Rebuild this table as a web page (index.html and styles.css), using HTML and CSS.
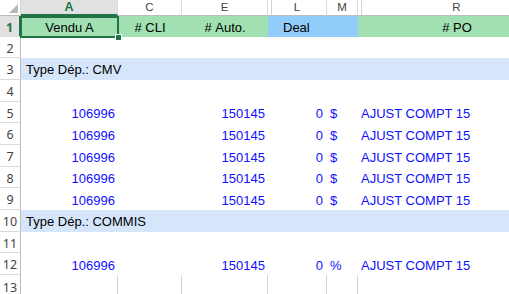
FILE: index.html
```html
<!DOCTYPE html>
<html lang="fr">
<head>
<meta charset="utf-8">
<title>Ventes</title>
<link rel="stylesheet" href="styles.css">
</head>
<body>
<div class="sheet">
  <div class="row hdr">
    <div class="corner"><svg class="tri" width="9" height="9" viewBox="0 0 9 9"><polygon points="9,0 9,9 0,9" fill="#b9b9b9"/></svg></div>
    <div class="col sel">A</div>
    <div class="col">C</div>
    <div class="col">E</div>
    <div class="col gap">L</div>
    <div class="col">M</div>
    <div class="col gap">R</div>
  </div>

  <div class="row h21">
    <div class="rn sel">1</div>
    <div class="c title active">Vendu A</div>
    <div class="c title">#&nbsp;CLI</div>
    <div class="c title">#&nbsp;Auto.</div>
    <div class="c title deal">Deal</div>
    <div class="c title deal"></div>
    <div class="c title">#&nbsp;PO</div>
  </div>

  <div class="row h21"><div class="rn">2</div><div class="blank"></div></div>

  <div class="row h22"><div class="rn">3</div><div class="band">Type Dép.: CMV</div></div>

  <div class="row h22"><div class="rn">4</div><div class="blank"></div></div>

  <div class="row h21">
    <div class="rn">5</div>
    <div class="c num">106996</div><div class="c"></div><div class="c num">150145</div>
    <div class="c num">0</div><div class="c unit">$</div><div class="c po">AJUST COMPT 15</div>
  </div>
  <div class="row h22">
    <div class="rn">6</div>
    <div class="c num">106996</div><div class="c"></div><div class="c num">150145</div>
    <div class="c num">0</div><div class="c unit">$</div><div class="c po">AJUST COMPT 15</div>
  </div>
  <div class="row h22">
    <div class="rn">7</div>
    <div class="c num">106996</div><div class="c"></div><div class="c num">150145</div>
    <div class="c num">0</div><div class="c unit">$</div><div class="c po">AJUST COMPT 15</div>
  </div>
  <div class="row h21">
    <div class="rn">8</div>
    <div class="c num">106996</div><div class="c"></div><div class="c num">150145</div>
    <div class="c num">0</div><div class="c unit">$</div><div class="c po">AJUST COMPT 15</div>
  </div>
  <div class="row h22">
    <div class="rn">9</div>
    <div class="c num">106996</div><div class="c"></div><div class="c num">150145</div>
    <div class="c num">0</div><div class="c unit">$</div><div class="c po">AJUST COMPT 15</div>
  </div>

  <div class="row h22"><div class="rn">10</div><div class="band">Type Dép.: COMMIS</div></div>

  <div class="row h21"><div class="rn">11</div><div class="blank"></div></div>

  <div class="row h22">
    <div class="rn">12</div>
    <div class="c num">106996</div><div class="c"></div><div class="c num">150145</div>
    <div class="c num">0</div><div class="c unit">%</div><div class="c po">AJUST COMPT 15</div>
  </div>

  <div class="row h22 open">
    <div class="rn">13</div>
    <div class="c grid"></div><div class="c grid"></div><div class="c grid"></div>
    <div class="c grid"></div><div class="c grid"></div><div class="c"></div>
  </div>
</div>
</body>
</html>
```

FILE: styles.css
```css
html, body {
  margin: 0;
  padding: 0;
  background: #ffffff;
  overflow: hidden;
}

.sheet {
  width: 509px;
  height: 294px;
  overflow: hidden;
  font-family: "Liberation Sans", Arial, sans-serif;
  font-size: 13px;
  color: #000;
}

.row {
  display: grid;
  grid-template-columns: 21px 97px 64px 86px 59px 31px 198px;
  width: 556px;
}

.h21 { height: 21px; }
.h22 { height: 22px; }

/* column letters */
.hdr {
  height: 16px;
}

.corner {
  position: relative;
  background: #ffffff;
  border-right: 1px solid #d4d4d4;
  border-bottom: 1px solid #bcbcbc;
  box-sizing: border-box;
}

.tri {
  position: absolute;
  right: 2px;
  bottom: 2px;
}

.col {
  box-sizing: border-box;
  border-right: 1px solid #dadada;
  border-bottom: 1px solid #bcbcbc;
  font-family: "Liberation Sans", Arial, sans-serif;
  font-size: 11.5px;
  line-height: 15px;
  color: #444444;
  text-align: center;
  background: #ffffff;
}

.col.sel {
  background: #e1e1e1;
  color: #217346;
  font-weight: bold;
  border-bottom: 2px solid #217346;
  font-size: 12.5px;
  line-height: 14px;
}

/* double line marking hidden columns */
.col.gap {
  box-shadow: inset 3px 0 0 #ffffff, inset 4px 0 0 #d4d4d4;
}

/* row numbers */
.rn {
  box-sizing: border-box;
  border-right: 1px solid #bcbcbc;
  border-bottom: 1px solid #dadada;
  font-family: "Noto Sans", "Open Sans", sans-serif;
  font-size: 12.5px;
  color: #444444;
  display: flex;
  align-items: center;
  justify-content: center;
  padding-top: 2px;
  background: #ffffff;
}

.rn.sel {
  background: #e1e1e1;
  color: #217346;
  font-weight: bold;
  border-right: 2px solid #217346;
}

.c {
  display: flex;
  align-items: center;
  white-space: nowrap;
  overflow: visible;
  padding-top: 2px;
  box-sizing: border-box;
}

.title {
  background: #a0e0b1;
  justify-content: center;
}

.title.deal {
  background: #92cdf9;
  justify-content: flex-start;
  padding-left: 15px;
}

/* active cell outline */
.active {
  position: relative;
}

.active::before {
  content: "";
  position: absolute;
  left: -1px;
  top: 0;
  right: -1px;
  bottom: -1px;
  border: 2px solid #217346;
}

.active::after {
  content: "";
  position: absolute;
  right: -4px;
  bottom: -4px;
  width: 5px;
  height: 5px;
  background: #217346;
  border: 1px solid #ffffff;
}

.blank {
  grid-column: 2 / -1;
}

.band {
  grid-column: 2 / -1;
  background: #d6e6fa;
  display: flex;
  align-items: center;
  padding-left: 5px;
  padding-top: 1px;
}

.num {
  justify-content: flex-end;
  padding-right: 3px;
  color: #1010ff;
}

.num + .unit {
  color: #1010ff;
  padding-left: 3px;
}

.c:nth-child(5).num {
  padding-right: 4px;
}

.po {
  color: #1010ff;
  padding-left: 3px;
}

.open .rn {
  border-bottom: none;
}

.grid {
  border-right: 1px solid #d4d4d4;
}
```
